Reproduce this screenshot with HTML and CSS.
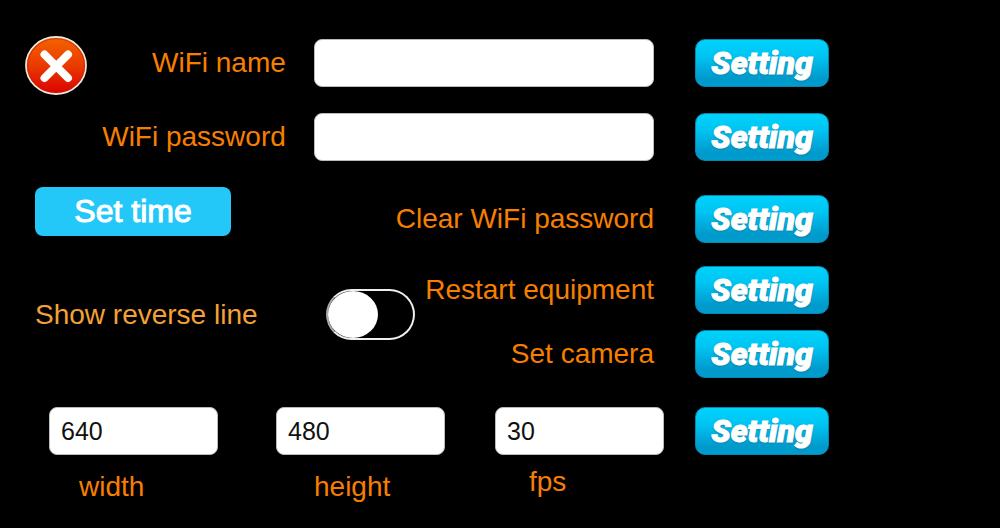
FILE: index.html
```html
<!DOCTYPE html>
<html lang="en">
<head>
<meta charset="utf-8">
<meta name="viewport" content="width=device-width, initial-scale=1">
<title>Camera settings</title>
<link rel="stylesheet" href="styles.css">
</head>
<body>
<main class="page">
  <section class="wifi">
    <button class="close" type="button" aria-label="Close">
      <svg class="close-icon" viewBox="0 0 62 60" aria-hidden="true">
        <defs>
          <linearGradient id="red" x1="0" y1="0" x2="0" y2="1">
            <stop offset="0" stop-color="#f46400"/>
            <stop offset="0.5" stop-color="#ea3a00"/>
            <stop offset="1" stop-color="#dc0000"/>
          </linearGradient>
        </defs>
        <ellipse cx="31" cy="29.5" rx="30" ry="28.5" fill="url(#red)" stroke="#f6e9e2" stroke-width="1.8"/>
        <ellipse cx="31" cy="29.5" rx="28.5" ry="27" fill="none" stroke="#b82800" stroke-width="1.4" opacity="0.5"/>
        <path d="M19.5 18.5 43 42M43 18.5 19.5 42" fill="none" stroke="#fff" stroke-width="8" stroke-linecap="round"/>
      </svg>
    </button>
    <form class="wifi-form">
      <label class="label wifi-label" for="wifi-name">WiFi name</label>
      <input class="field" id="wifi-name" type="text">
      <button class="setting" type="button">Setting</button>
      <label class="label wifi-label" for="wifi-password">WiFi password</label>
      <input class="field" id="wifi-password" type="text">
      <button class="setting" type="button">Setting</button>
    </form>
  </section>

  <section class="controls">
    <div class="display">
      <button class="set-time" type="button">Set time</button>
      <div class="reverse">
        <label class="label label-soft" for="reverse-line">Show reverse line</label>
        <input class="switch" id="reverse-line" type="checkbox" role="switch">
      </div>
    </div>
    <div class="actions">
      <div class="action action-clear"><span class="label" id="clear">Clear WiFi password</span><button class="setting" type="button" aria-describedby="clear">Setting</button></div>
      <div class="action action-restart"><span class="label" id="restart">Restart equipment</span><button class="setting" type="button" aria-describedby="restart">Setting</button></div>
      <div class="action"><span class="label" id="camera">Set camera</span><button class="setting" type="button" aria-describedby="camera">Setting</button></div>
    </div>
  </section>

  <form class="camera">
    <div class="size size-width">
      <input class="field" id="width" type="text" inputmode="numeric" value="640">
      <label class="label" for="width">width</label>
    </div>
    <div class="size size-height">
      <input class="field" id="height" type="text" inputmode="numeric" value="480">
      <label class="label" for="height">height</label>
    </div>
    <div class="size size-fps">
      <input class="field" id="fps" type="text" inputmode="numeric" value="30">
      <label class="label" for="fps">fps</label>
    </div>
    <button class="setting" type="button">Setting</button>
  </form>
</main>
</body>
</html>
```
FILE: styles.css
```css
* {
  box-sizing: border-box;
}

body {
  margin: 0;
  background: #000;
  font-family: "Liberation Sans", Arial, sans-serif;
}

button,
input {
  margin: 0;
  font-family: inherit;
}

.page {
  padding: 36px 17.1% 24px 25px;
}

.label {
  color: #f77f00;
  font-size: 28px;
  line-height: 32px;
  white-space: nowrap;
}

.label-soft {
  color: #f4a136;
}

.field {
  width: 100%;
  min-width: 0;
  height: 48px;
  padding: 0 11px;
  border: 1px solid #bbb;
  border-radius: 8px;
  background: #fff;
  color: #111;
  font-size: 25px;
}

.setting {
  flex: none;
  width: 134px;
  height: 48px;
  padding: 0;
  border: 1px solid #0787ab;
  border-radius: 10px;
  background: linear-gradient(#00d2fc, #00c4f2 35%, #0099cb 85%, #009dce);
  color: #fff;
  font-family: Roboto, "Liberation Sans", sans-serif;
  font-size: 32px;
  font-style: italic;
  font-weight: 900;
  line-height: 44px;
  text-shadow: 0 1px 2px #136a86;
  -webkit-text-stroke: 1px #fff;
}

.wifi {
  display: flex;
  align-items: flex-start;
}

.close {
  flex: none;
  width: 62px;
  height: 60px;
  padding: 0;
  border: 0;
  background: none;
}

.close-icon {
  display: block;
  width: 100%;
  height: 100%;
}

.wifi-form {
  flex: 1;
  display: grid;
  grid-template-columns: 2fr 3fr 175px;
  row-gap: 26px;
  align-items: center;
  padding-top: 3px;
}

.wifi-form .setting {
  justify-self: end;
}

.wifi-label {
  padding-right: 28px;
  text-align: right;
}

.controls {
  display: flex;
  margin-top: 26px;
  padding-left: 10px;
}

.display {
  flex: none;
  width: 380px;
}

.set-time {
  display: block;
  width: 196px;
  height: 49px;
  padding: 0;
  border: 0;
  border-radius: 8px;
  background: #24c8f8;
  color: #fff;
  font-size: 32px;
  -webkit-text-stroke: 1px #fff;
}

.reverse {
  display: flex;
  align-items: center;
  justify-content: space-between;
  margin-top: 53px;
}

.switch {
  appearance: none;
  width: 89px;
  height: 51px;
  border: 2px solid #eee;
  border-left-color: #aaa;
  border-radius: 26px;
  background: #000;
}

.switch::before {
  content: "";
  display: block;
  width: 50px;
  height: 47px;
  border-radius: 50%;
  background: #fff;
}

.switch:checked::before {
  margin-left: auto;
}

.actions {
  flex: 1;
  min-width: 0;
  padding-top: 8px;
}

.action {
  display: flex;
  align-items: center;
  justify-content: flex-end;
  gap: 41px;
}

.action-clear {
  margin-bottom: 23px;
}

.action-restart {
  margin-bottom: 16px;
}

.camera {
  display: flex;
  align-items: flex-start;
  margin-top: 29px;
  padding-left: 24px;
}

.size {
  flex: 1;
  display: flex;
  flex-direction: column;
  min-width: 0;
}

.size .label {
  padding-top: 16px;
}

.size-width {
  margin-right: 58px;
}

.size-width .label {
  padding-left: 30px;
}

.size-height {
  margin-right: 50px;
}

.size-height .label {
  padding-left: 38px;
}

.size-fps {
  margin-right: 31px;
}

.size-fps .label {
  padding-top: 11px;
  padding-left: 34px;
}
```
